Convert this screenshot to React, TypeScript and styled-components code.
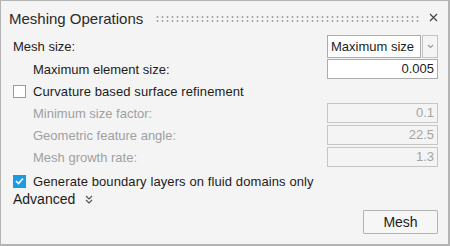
import React from 'react';
import styled, { createGlobalStyle } from 'styled-components';

const GlobalStyle = createGlobalStyle`
    body {
        margin: 0;
        background: #ffffff;
        font-family: "Liberation Sans", Arial, sans-serif;
    }
`;

const Panel = styled.div`
    width: 450px;
    height: 246px;
    box-sizing: border-box;
    background: #f4f4f4;
    border: 1px solid #b4b4b4;
    border-right-width: 2px;
    border-bottom-width: 2px;
    color: #1c1c1c;
    font-size: 13px;
    display: flex;
    flex-direction: column;
    padding: 0 10px 0 11px;
`;

const TitleBar = styled.div`
    height: 33px;
    display: flex;
    align-items: center;
    margin-left: -3px;
    .title {
        font-size: 15px;
        color: #2a2a2a;
        margin-top: 1px;
    }
    .grip {
        flex: 1;
        height: 8px;
        margin: 2px 9px 0 12px;
        background-image: radial-gradient(circle, #a4a4a4 0.9px, transparent 1.2px);
        background-size: 5px 4px;
    }
`;

const Row = styled.div<{ $h: number; $top?: number; $indent?: boolean; $disabled?: boolean }>`
    height: ${p => p.$h}px;
    margin-top: ${p => p.$top || 0}px;
    display: flex;
    align-items: center;
    justify-content: space-between;
    padding-left: ${p => (p.$indent ? 21 : 1)}px;
    color: ${p => (p.$disabled ? '#a0a0a0' : '#1c1c1c')};
`;

const Check = styled.span<{ $on?: boolean }>`
    width: 13px;
    height: 13px;
    box-sizing: border-box;
    border: 1px solid ${p => (p.$on ? '#1b9ce2' : '#9a9a9a')};
    background: ${p => (p.$on ? '#1b9ce2' : '#ffffff')};
    display: inline-flex;
    align-items: center;
    justify-content: center;
    margin-right: 7px;
`;

const CheckLabel = styled.label`
    display: flex;
    align-items: center;
    letter-spacing: 0.1px;
`;

const Field = styled.div<{ $disabled?: boolean }>`
    width: 111px;
    height: 20px;
    box-sizing: border-box;
    border: 1px solid ${p => (p.$disabled ? '#c6c6c6' : '#acacac')};
    background: ${p => (p.$disabled ? '#f4f4f4' : '#ffffff')};
    color: ${p => (p.$disabled ? '#a4a4a4' : '#1c1c1c')};
    text-align: right;
    padding-right: 3px;
    line-height: 18px;
`;

const Select = styled.div`
    width: 111px;
    height: 23px;
    display: flex;
    .value {
        flex: 1;
        box-sizing: border-box;
        border: 1px solid #acacac;
        background: #ffffff;
        padding-left: 3px;
        line-height: 21px;
        white-space: nowrap;
        overflow: hidden;
    }
    .arrow {
        width: 16px;
        margin-left: 1px;
        box-sizing: border-box;
        border: 1px solid #c4c4c4;
        background: #f4f4f4;
        display: flex;
        align-items: center;
        justify-content: center;
    }
`;

const Advanced = styled.div`
    display: flex;
    align-items: center;
    gap: 10px;
    font-size: 14px;
`;

const Footer = styled.div`
    display: flex;
    justify-content: flex-end;
    margin-top: 4px;
`;

const Button = styled.button`
    width: 75px;
    height: 24px;
    box-sizing: border-box;
    border: 1px solid #b4b4b4;
    border-radius: 1px;
    background: #f6f6f6;
    font-family: "Liberation Sans", Arial, sans-serif;
    font-size: 14px;
    color: #1c1c1c;
    padding: 0;
`;

function App() {
    return (
        <>
            <GlobalStyle />
            <Panel>
                <TitleBar>
                    <span className="title">Meshing Operations</span>
                    <span className="grip" />
                    <svg width="9" height="9" viewBox="0 0 9 9">
                        <path d="M1 1 L8 8 M8 1 L1 8" stroke="#444" strokeWidth="1.2" />
                    </svg>
                </TitleBar>

                <Row $h={24}>
                    <span>Mesh size:</span>
                    <Select>
                        <div className="value">Maximum size</div>
                        <div className="arrow">
                            <svg width="7" height="5" viewBox="0 0 7 5">
                                <path d="M1 1 L3.5 3.5 L6 1" stroke="#9a9a9a" strokeWidth="1.2" fill="none" />
                            </svg>
                        </div>
                    </Select>
                </Row>
                <Row $h={22} $indent>
                    <span>Maximum element size:</span>
                    <Field>0.005</Field>
                </Row>
                <Row $h={22}>
                    <CheckLabel>
                        <Check />
                        Curvature based surface refinement
                    </CheckLabel>
                </Row>
                <Row $h={22} $indent $disabled>
                    <span>Minimum size factor:</span>
                    <Field $disabled>0.1</Field>
                </Row>
                <Row $h={22} $indent $disabled>
                    <span>Geometric feature angle:</span>
                    <Field $disabled>22.5</Field>
                </Row>
                <Row $h={22} $indent $disabled>
                    <span>Mesh growth rate:</span>
                    <Field $disabled>1.3</Field>
                </Row>
                <Row $h={22} $top={2}>
                    <CheckLabel>
                        <Check $on>
                            <svg width="9" height="8" viewBox="0 0 9 8">
                                <path d="M1 4 L3.5 6.5 L8 1.5" stroke="#fff" strokeWidth="1.6" fill="none" />
                            </svg>
                        </Check>
                        Generate boundary layers on fluid domains only
                    </CheckLabel>
                </Row>
                <Row $h={14}>
                    <Advanced>
                        Advanced
                        <svg width="8" height="9" viewBox="0 0 8 9">
                            <path d="M1 1 L4 4 L7 1 M1 5 L4 8 L7 5" stroke="#555" strokeWidth="1.2" fill="none" />
                        </svg>
                    </Advanced>
                </Row>
                <Footer>
                    <Button>Mesh</Button>
                </Footer>
            </Panel>
        </>
    );
}

export default App;
